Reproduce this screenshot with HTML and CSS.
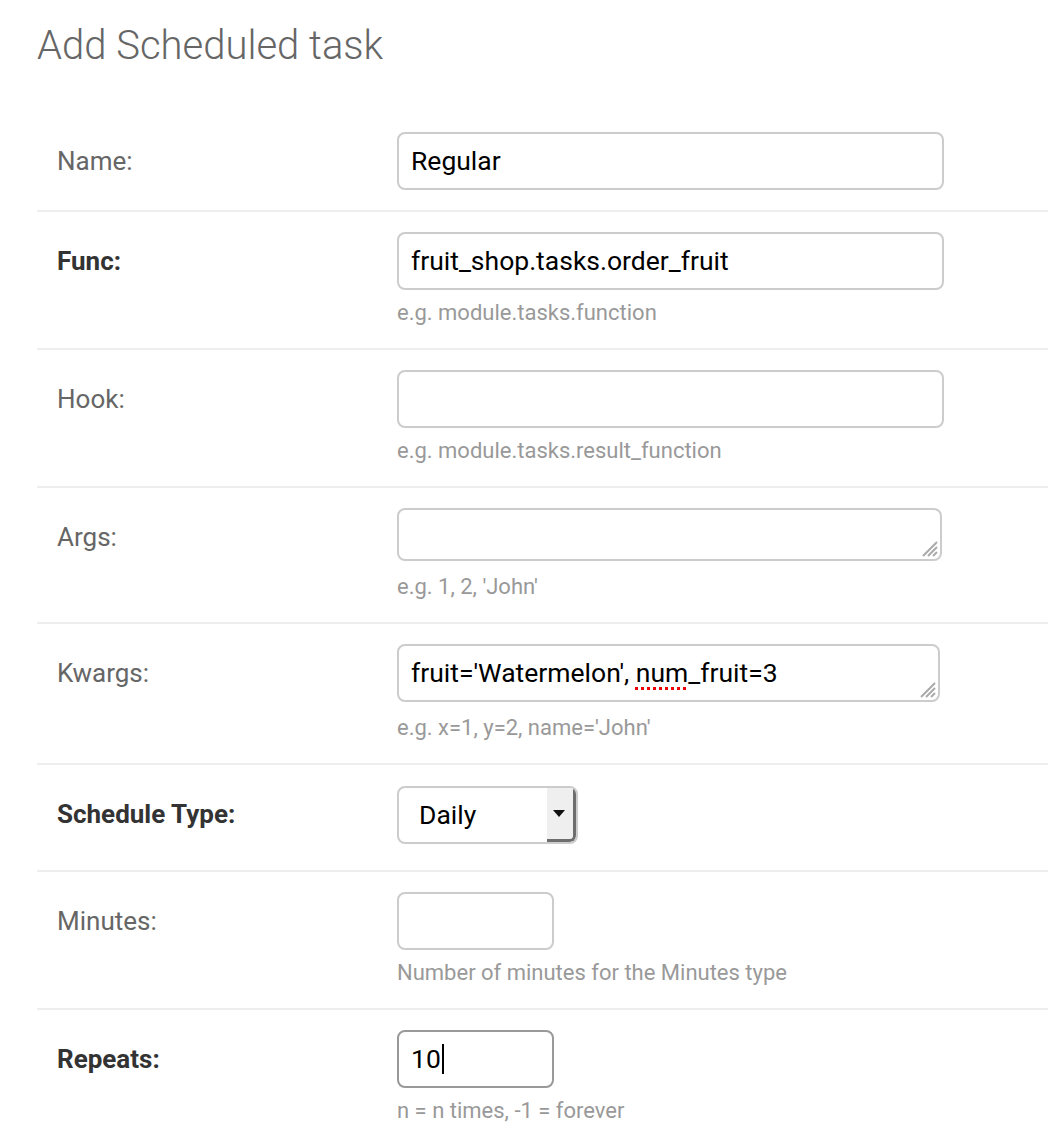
FILE: index.html
```html
<!DOCTYPE html>
<html>
<head>
<meta charset="utf-8">
<link rel="stylesheet" href="styles.css">
</head>
<body>
<div class="page">
  <h1 class="title">Add Scheduled task</h1>
  <div class="form">
    <div class="row">
      <div class="label">Name:</div>
      <div class="control">
        <div class="input wide">Regular</div>
      </div>
    </div>
    <div class="row">
      <div class="label required">Func:</div>
      <div class="control">
        <div class="input wide">fruit_shop.tasks.order_fruit</div>
        <div class="help">e.g. module.tasks.function</div>
      </div>
    </div>
    <div class="row">
      <div class="label">Hook:</div>
      <div class="control">
        <div class="input wide"></div>
        <div class="help">e.g. module.tasks.result_function</div>
      </div>
    </div>
    <div class="row">
      <div class="label">Args:</div>
      <div class="control">
        <div class="input textarea args">
          <svg class="grip" width="18" height="18" viewBox="0 0 18 18"><path d="M17 3 L3 17 M17 8 L8 17 M17 13 L13 17" stroke="#aaa" stroke-width="2" fill="none"/></svg>
        </div>
        <div class="help">e.g. 1, 2, 'John'</div>
      </div>
    </div>
    <div class="row">
      <div class="label">Kwargs:</div>
      <div class="control">
        <div class="input textarea kwargs">fruit='Watermelon', <span class="spell">num</span>_fruit=3
          <svg class="grip" width="18" height="18" viewBox="0 0 18 18"><path d="M17 3 L3 17 M17 8 L8 17 M17 13 L13 17" stroke="#aaa" stroke-width="2" fill="none"/></svg>
        </div>
        <div class="help">e.g. x=1, y=2, name='John'</div>
      </div>
    </div>
    <div class="row">
      <div class="label required">Schedule Type:</div>
      <div class="control">
        <div class="select">Daily<span class="select-btn"><svg width="12" height="8" viewBox="0 0 12 8"><path d="M0 0 H12 L6 7 Z" fill="#111"/></svg></span></div>
      </div>
    </div>
    <div class="row">
      <div class="label">Minutes:</div>
      <div class="control">
        <div class="input small"></div>
        <div class="help">Number of minutes for the Minutes type</div>
      </div>
    </div>
    <div class="row last">
      <div class="label required">Repeats:</div>
      <div class="control">
        <div class="input small focus">10<span class="caret"></span></div>
        <div class="help">n = n times, -1 = forever</div>
      </div>
    </div>
  </div>
</div>
</body>
</html>
```
FILE: styles.css
```css
html, body {
  margin: 0;
  padding: 0;
  background: #fff;
}
body {
  font-family: Roboto, "Liberation Sans", sans-serif;
  overflow: hidden;
}
.page {
  padding-left: 37px;
}
.title {
  margin: 0;
  padding-top: 22px;
  height: 112px;
  box-sizing: border-box;
  font-size: 40px;
  font-weight: 300;
  line-height: 48px;
  color: #666;
}
.row {
  display: flex;
  align-items: flex-start;
  padding: 20px 20px 20px 20px;
  border-bottom: 2px solid #eee;
}
.row.last {
  border-bottom: none;
}
.label {
  width: 340px;
  flex: none;
  font-size: 26px;
  line-height: 58px;
  color: #666;
}
.label.required {
  font-weight: 700;
  color: #333;
}
.control {
  display: flex;
  flex-direction: column;
  align-items: flex-start;
}
.input {
  position: relative;
  box-sizing: border-box;
  height: 58px;
  border: 2px solid #ccc;
  border-radius: 8px;
  padding: 0 12px;
  font-size: 26.5px;
  line-height: 54px;
  color: #000;
  white-space: nowrap;
}
.input.wide {
  width: 547px;
}
.input.textarea {
  width: 545px;
  margin-bottom: 3px;
}
.input.args {
  height: 53px;
}
.input.kwargs {
  width: 543px;
}
.input.small {
  width: 157px;
}
.input.focus {
  border-color: #999;
}
.grip {
  position: absolute;
  right: 2px;
  bottom: 2px;
}
.spell {
  text-decoration: underline dotted #e00;
  text-decoration-thickness: 3px;
  text-underline-offset: 5px;
}
.caret {
  display: inline-block;
  width: 2px;
  height: 30px;
  background: #000;
  vertical-align: -6px;
  margin-left: 1px;
}
.help {
  margin-top: 8px;
  font-size: 22px;
  line-height: 30px;
  color: #999;
}
.select {
  position: relative;
  box-sizing: border-box;
  width: 181px;
  height: 58px;
  margin: 1px 0 6px;
  border: 2px solid #ccc;
  border-radius: 8px;
  padding-left: 20px;
  font-size: 26.5px;
  line-height: 54px;
  color: #000;
  overflow: hidden;
}
.select-btn {
  position: absolute;
  top: 0;
  right: 0;
  bottom: 0;
  width: 29px;
  box-sizing: border-box;
  background: #efefef;
  border-right: 3px solid #6e6e6e;
  border-bottom: 3px solid #6e6e6e;
  border-bottom-right-radius: 6px;
  display: flex;
  align-items: center;
  justify-content: center;
  padding-right: 2px;
}
```
